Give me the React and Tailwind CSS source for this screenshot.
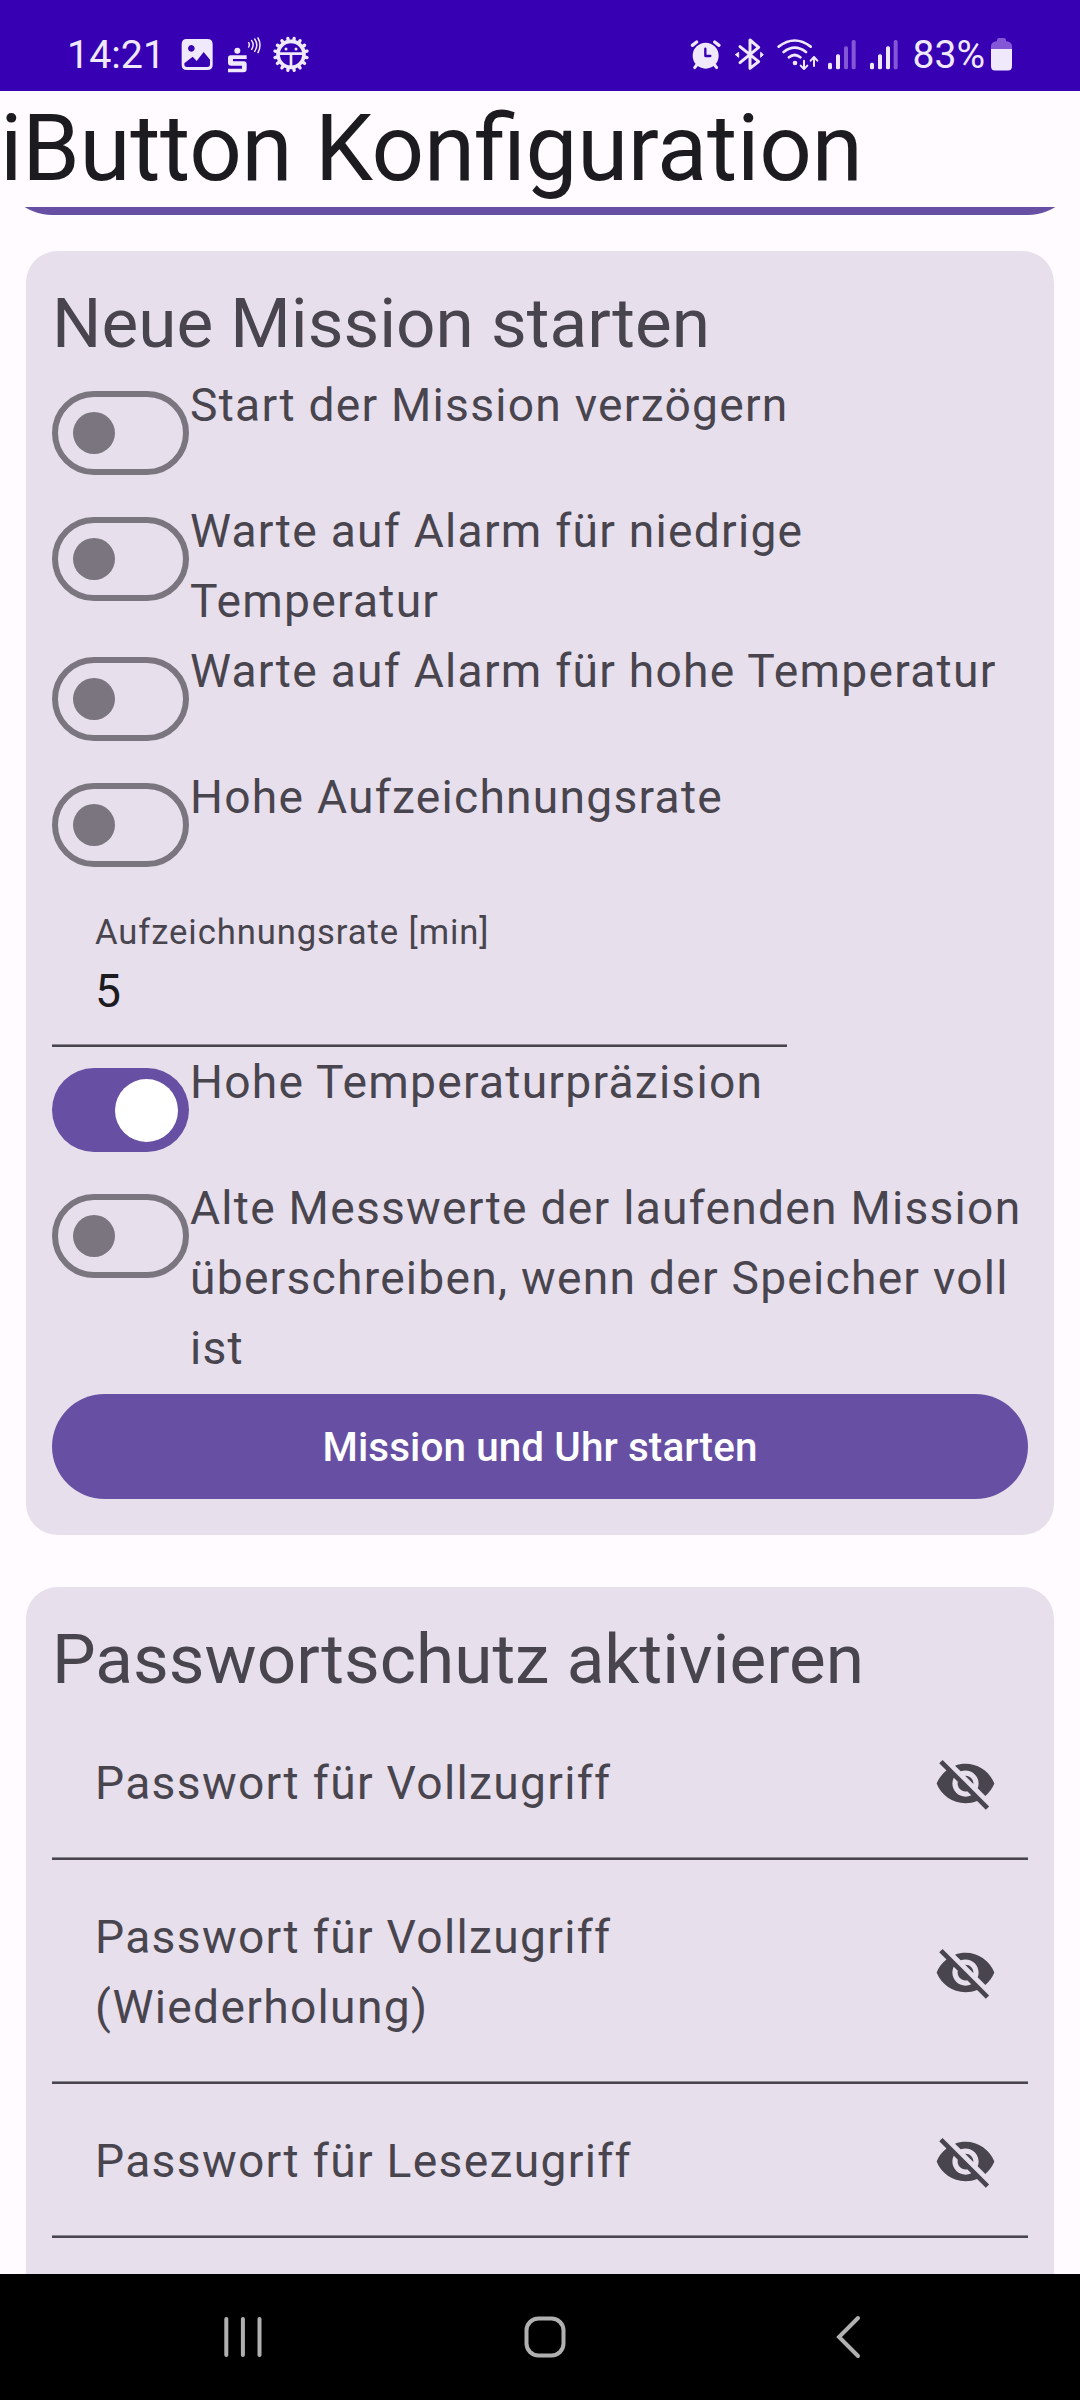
const MISSION_SWITCHES = [
  { lines: ["Start der Mission verzögern"], on: false },
  { lines: ["Warte auf Alarm für niedrige", "Temperatur"], on: false },
  { lines: ["Warte auf Alarm für hohe Temperatur"], on: false },
  { lines: ["Hohe Aufzeichnungsrate"], on: false },
];

const PRECISION_SWITCHES = [
  { lines: ["Hohe Temperaturpräzision"], on: true },
  {
    lines: [
      "Alte Messwerte der laufenden Mission",
      "überschreiben, wenn der Speicher voll",
      "ist",
    ],
    on: false,
  },
];

const PASSWORD_FIELDS = [
  ["Passwort für Vollzugriff"],
  ["Passwort für Vollzugriff", "(Wiederholung)"],
  ["Passwort für Lesezugriff"],
];

const GEAR_TEETH = Array.from({ length: 16 }, (_, i) => i * 22.5 + 11.25);

/* Notification icons: picture, savings bank logo, gear with robot face */
function NotificationIcons() {
  return (
    <svg className="ml-[12px] h-[42px] w-[136px]" viewBox="0 0 408 126" fill="#f0e9fc">
      <path
        fillRule="evenodd"
        d="M31 15H91Q107 15 107 31V93Q107 108 91 108H29Q14 108 14 93V31Q14 15 29 15ZM43 33a10 10 0 1 0 .1 0ZM22 91Q22 99 30 99H91Q99 99 99 91V77L80 54L59 81L47 68L22 88Z"
      />
      <circle cx="181" cy="50" r="9" />
      <path d="M161 64H209V75H168V82H200Q209 82 209 91V105Q209 115 199 115H153V104H195V95H163Q153 95 153 86V72Q153 64 161 64Z" />
      <path
        d="M215 26q4 6 0 13M224 20q9 12 0 26M233 15q13 18 0 37M243 12q12 20 0 44"
        fill="none"
        stroke="#f0e9fc"
        strokeWidth="4.5"
        strokeLinecap="round"
      />
      <g stroke="#f0e9fc">
        {GEAR_TEETH.map((a) => (
          <line
            key={a}
            x1="342"
            y1="20"
            x2="342"
            y2="12"
            strokeWidth="10"
            strokeLinecap="round"
            transform={`rotate(${a} 342 61)`}
          />
        ))}
        <circle cx="342" cy="61" r="39" fill="none" strokeWidth="11" />
        <path d="M305 59H379M342 60V98" strokeWidth="8" fill="none" />
      </g>
      <circle cx="327" cy="45" r="4.5" />
      <circle cx="357" cy="45" r="4.5" />
    </svg>
  );
}

/* Alarm, bluetooth, wifi and the two signal meters */
function SystemIcons() {
  return (
    <svg className="h-[42px] w-[216px]" viewBox="54 42 648 126" fill="#f0e9fc">
      <circle cx="107" cy="107" r="39" />
      <g fill="none" stroke="#f0e9fc" strokeLinecap="round" strokeLinejoin="round">
        <path d="M67 76L80 66M147 76L134 66" strokeWidth="10" />
        <path d="M80 135L74 143M134 135L140 143" strokeWidth="9" />
        <path d="M106 86V108H121" stroke="#3700b3" strokeWidth="7" />
        <path d="M210 80L266 125L240 145V60L266 82L210 128" strokeWidth="9" />
        <path d="M326 80Q374 43 422 80M341 96Q374 70 408 96M357 112Q374 98 391 112" strokeWidth="8" />
        <path d="M402 122V145M392 137L402 147L412 137M432 138V113M422 122L432 111L442 122" strokeWidth="6" />
      </g>
      <path d="M206 97V112L196 104ZM272 97L280 104L272 112Z" stroke="#f0e9fc" strokeWidth="3" strokeLinejoin="round" />
      <circle cx="375" cy="129" r="7" />
      <rect x="474" y="128" width="12" height="20" rx="5" />
      <rect x="498" y="103" width="12" height="45" rx="5" />
      <g fill="#8457d6">
        <rect x="522" y="79" width="12" height="69" rx="5" />
        <rect x="545" y="60" width="12" height="88" rx="5" />
        <rect x="671" y="60" width="12" height="88" rx="5" />
      </g>
      <rect x="600" y="128" width="12" height="20" rx="5" />
      <rect x="624" y="103" width="12" height="45" rx="5" />
      <rect x="648" y="79" width="12" height="69" rx="5" />
    </svg>
  );
}

function BatteryIcon() {
  return (
    <svg className="ml-[5px] h-[34px] w-[23px]" viewBox="0 0 23 34">
      <path d="M7 4V3Q7 1 9 1H14Q16 1 16 3V4Q22 5 22 9V13H1V9Q1 5 7 4Z" fill="#8457d6" />
      <path d="M1 12H22V29Q22 33.500 18 33.500H5Q1 33.500 1 29Z" fill="#f0e9fc" />
    </svg>
  );
}

function StatusBar() {
  return (
    <header className="flex h-[91px] shrink-0 items-start justify-between bg-[#3700b3] pl-[67px] pr-[67px] text-[39.4px] text-[#f0e9fc]">
      <div className="flex pt-[34px]">
        <span className="-mt-[2px] leading-[46px]">14:21</span>
        <NotificationIcons />
      </div>
      <div className="flex pt-[34px]">
        <SystemIcons />
        <span className="-mt-[2px] ml-[9px] text-[39px] leading-[46px]">83%</span>
        <div className="pt-[3px]">
          <BatteryIcon />
        </div>
      </div>
    </header>
  );
}

function Switch({ on }) {
  return on ? (
    <span className="mt-[21px] flex h-[84px] w-[137px] shrink-0 items-center justify-end rounded-full bg-[#6750a3] pr-[11px]">
      <span className="size-[63px] rounded-full bg-white" />
    </span>
  ) : (
    <span className="mt-[21px] flex h-[84px] w-[137px] shrink-0 items-center rounded-full border-6 border-[#7b757f] pl-[15px]">
      <span className="size-[42px] rounded-full bg-[#7b757f]" />
    </span>
  );
}

function SwitchRow({ lines, on }) {
  return (
    <div className="flex min-h-[126px]">
      <Switch on={on} />
      <p className="pl-px text-[46.2px] leading-[70px] tracking-[1.24px] whitespace-nowrap">
        {lines.map((line) => (
          <span key={line} className="block">
            {line}
          </span>
        ))}
      </p>
    </div>
  );
}

function Underline() {
  return (
    <div className="h-[3px] border-t border-[#8b8791] bg-[#49454f]" />
  );
}

function VisibilityOff() {
  return (
    <svg className="size-[63px] shrink-0" viewBox="0 0 24 24" fill="#49454f">
      <path d="M12 7c2.76 0 5 2.240 5 5 0 .65-.13 1.260-.36 1.830l2.920 2.920c1.510-1.260 2.700-2.890 3.430-4.750-1.730-4.390-6-7.500-11-7.500-1.400 0-2.740.25-3.980.7l2.160 2.160C10.740 7.130 11.350 7 12 7zM2 4.270l2.280 2.280.46.46C3.080 8.300 1.780 10.020 1 12c1.730 4.390 6 7.500 11 7.500 1.550 0 3.030-.3 4.380-.84l.42.42L19.730 22 21 20.730 3.270 3 2 4.270zM7.530 9.800l1.550 1.550c-.05.21-.08.43-.08.65 0 1.660 1.340 3 3 3 .22 0 .44-.03.65-.08l1.550 1.550c-.67.33-1.410.53-2.200.53-2.760 0-5-2.240-5-5 0-.79.2-1.530.53-2.200zm4.310-.78l3.150 3.150.02-.16c0-1.660-1.340-3-3-3l-.17.01z" />
    </svg>
  );
}

function PasswordField({ lines }) {
  return (
    <div>
      <div className="flex items-center justify-between pt-[42px] pr-[31px] pb-[39px] pl-[43px]">
        <p className="text-[46.2px] leading-[70px] tracking-[1.3px]">
          {lines.map((line) => (
            <span key={line} className="block">
              {line}
            </span>
          ))}
        </p>
        <VisibilityOff />
      </div>
      <Underline />
    </div>
  );
}

function Card({ title, children }) {
  return (
    <section className="mx-[26px] rounded-[31.5px] bg-[#e7dfeb] p-[26px]">
      <h2 className="text-[69.3px] leading-[93px]">{title}</h2>
      {children}
    </section>
  );
}

function NavigationBar() {
  return (
    <nav className="flex h-[126px] shrink-0 items-center bg-black pl-[222px]">
      <svg className="size-[42px]" viewBox="0 0 42 42" stroke="#b0b0b0" strokeWidth="4" strokeLinecap="round">
        <path d="M4.300 3V39M20.900 3V39M37.500 3V39" />
      </svg>
      <svg className="ml-[260px] size-[42px]" viewBox="0 0 42 42" fill="none" stroke="#b0b0b0" strokeWidth="4">
        <rect x="2.500" y="2.500" width="37" height="37" rx="12" />
      </svg>
      <svg className="ml-[270px] h-[44px] w-[26px]" viewBox="0 0 26 44" fill="none" stroke="#b0b0b0" strokeWidth="4" strokeLinecap="round">
        <path d="M22 3L3 22L22 41" />
      </svg>
    </nav>
  );
}

export default function App() {
  return (
    <div className="flex h-[2400px] w-[1080px] flex-col overflow-hidden bg-[#fffbfe] font-[Roboto,sans-serif] text-[#49454f]">
      <StatusBar />
      <h1 className="h-[116px] shrink-0 text-[92.4px] leading-[116px] tracking-[-0.27px] whitespace-nowrap text-[#1c1b1f] [font-feature-settings:'liga'_1]">
        iButton Konfiguration
      </h1>
      <main className="flex min-h-0 flex-1 flex-col overflow-hidden">
        {/* Lower edge of the full-width button that is scrolled under the title */}
        <div className="flex h-2 shrink-0 items-end overflow-hidden">
          <div className="h-[105px] w-full shrink-0 rounded-full bg-[#6750a3]" />
        </div>
        <div className="mt-9 flex shrink-0 flex-col gap-[52px]">
          <Card title="Neue Mission starten">
            {MISSION_SWITCHES.map((row) => (
              <SwitchRow key={row.lines[0]} {...row} />
            ))}
            <div className="w-[735px]">
              <div className="h-[156px] pt-[21px] pl-[43px]">
                <p className="text-[34.65px] leading-[46px] tracking-[0.9px]">
                  Aufzeichnungsrate [min]
                </p>
                <p className="pt-px text-[46.2px] leading-[70px] text-[#1c1b1f]">5</p>
              </div>
              <Underline />
            </div>
            {PRECISION_SWITCHES.map((row) => (
              <SwitchRow key={row.lines[0]} {...row} />
            ))}
            <button className="mt-[11px] mb-[10px] flex h-[105px] w-full items-center justify-center rounded-full bg-[#6750a3] pt-[3px] text-[40.4px] font-medium tracking-[0.1px] text-white">
              Mission und Uhr starten
            </button>
          </Card>
          <Card title="Passwortschutz aktivieren">
            {PASSWORD_FIELDS.map((lines) => (
              <PasswordField key={lines.join(" ")} lines={lines} />
            ))}
            <div className="h-[154px]" />
          </Card>
        </div>
      </main>
      <NavigationBar />
    </div>
  );
}
